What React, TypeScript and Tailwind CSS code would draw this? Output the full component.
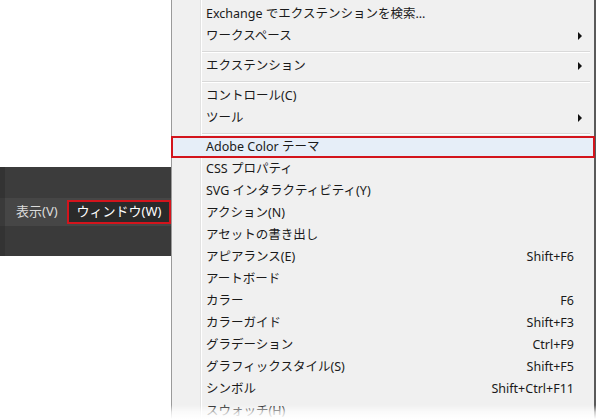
import React from 'react';

type Item =
  | { type: 'sep'; h: string }
  | { type: 'item'; label: string; shortcut?: string; sub?: boolean; active?: boolean };

const items: Item[] = [
  { type: 'item', label: 'Exchange でエクステンションを検索...' },
  { type: 'item', label: 'ワークスペース', sub: true },
  { type: 'sep', h: 'h-[8px]' },
  { type: 'item', label: 'エクステンション', sub: true },
  { type: 'sep', h: 'h-[8px]' },
  { type: 'item', label: 'コントロール(C)' },
  { type: 'item', label: 'ツール', sub: true },
  { type: 'sep', h: 'h-[7px]' },
  { type: 'item', label: 'Adobe Color テーマ', active: true },
  { type: 'item', label: 'CSS プロパティ' },
  { type: 'item', label: 'SVG インタラクティビティ(Y)' },
  { type: 'item', label: 'アクション(N)' },
  { type: 'item', label: 'アセットの書き出し' },
  { type: 'item', label: 'アピアランス(E)', shortcut: 'Shift+F6' },
  { type: 'item', label: 'アートボード' },
  { type: 'item', label: 'カラー', shortcut: 'F6' },
  { type: 'item', label: 'カラーガイド', shortcut: 'Shift+F3' },
  { type: 'item', label: 'グラデーション', shortcut: 'Ctrl+F9' },
  { type: 'item', label: 'グラフィックスタイル(S)', shortcut: 'Shift+F5' },
  { type: 'item', label: 'シンボル', shortcut: 'Shift+Ctrl+F11' },
  { type: 'item', label: 'スウォッチ(H)' },
];

function Arrow() {
  return (
    <svg width="5" height="8" viewBox="0 0 5 8" className="absolute right-[11px] top-1/2 -translate-y-1/2">
      <path d="M0 0 L4 4 L0 8 Z" fill="#111" />
    </svg>
  );
}

function MenuRow({ item }: { item: Extract<Item, { type: 'item' }> }) {
  return (
    <div
      className={`relative flex h-[22px] items-center pl-[34px] pr-[20px] ${
        item.active ? 'ml-[-1px] mr-[-1px] border-2 border-[#d3141c] bg-[#e6eef8]' : ''
      }`}
    >
      <span className={`flex-1 ${item.active ? 'ml-[-1px]' : ''}`}>{item.label}</span>
      {item.shortcut && <span>{item.shortcut}</span>}
      {item.sub && <Arrow />}
    </div>
  );
}

export default function App() {
  return (
    <div
      className="flex h-[419px] w-[596px] overflow-hidden bg-white text-[12.5px] text-[#1a1a1a]"
      style={{ fontFamily: '"Noto Sans", "Noto Sans CJK JP", sans-serif' }}
    >
      {/* app window menubar behind */}
      <div className="w-[171px] shrink-0 pt-[167px]">
        <div className="flex h-[89px] flex-col bg-[#3c3c3c]">
          <div className="h-[31px] border-l-[5px] border-[#333]" />
          <div className="flex h-[28px] items-center border-l-[5px] border-[#3a3a3a] bg-[#464646] text-[13px] text-[#dcdcdc]">
            <span className="pl-[11px]">表示(V)</span>
            <div className="ml-[9px] flex h-[24px] w-[104px] items-center border-2 border-[#d3141c] bg-[#2a2a2a] pl-[8px] text-white">
              ウィンドウ(W)
            </div>
          </div>
          <div className="flex-1 border-l-[5px] border-[#333] bg-[#3a3a3a]" />
        </div>
      </div>

      {/* dropdown */}
      <div className="relative h-[419px] flex-1">
        <div className="relative h-full border-l border-r-2 border-l-[#9a9a9a] border-r-[#5a5a5a] bg-[#f0f0f0] pt-[3px]">
          <div className="absolute bottom-0 left-[28px] top-0 w-[2px] border-l border-r border-l-[#e2e2e2] border-r-white" />
          {items.map((it, i) =>
            it.type === 'sep' ? (
              <div key={i} className={`relative ${it.h}`}>
                <div className="absolute left-[30px] right-[4px] top-[4px] h-[2px] border-b border-t border-b-white border-t-[#d9d9d9]" />
              </div>
            ) : (
              <MenuRow key={i} item={it} />
            )
          )}
        </div>
        <div className="pointer-events-none absolute bottom-0 left-0 right-0 h-[14px] bg-gradient-to-b from-white/0 via-white/70 to-white" />
      </div>
    </div>
  );
}
